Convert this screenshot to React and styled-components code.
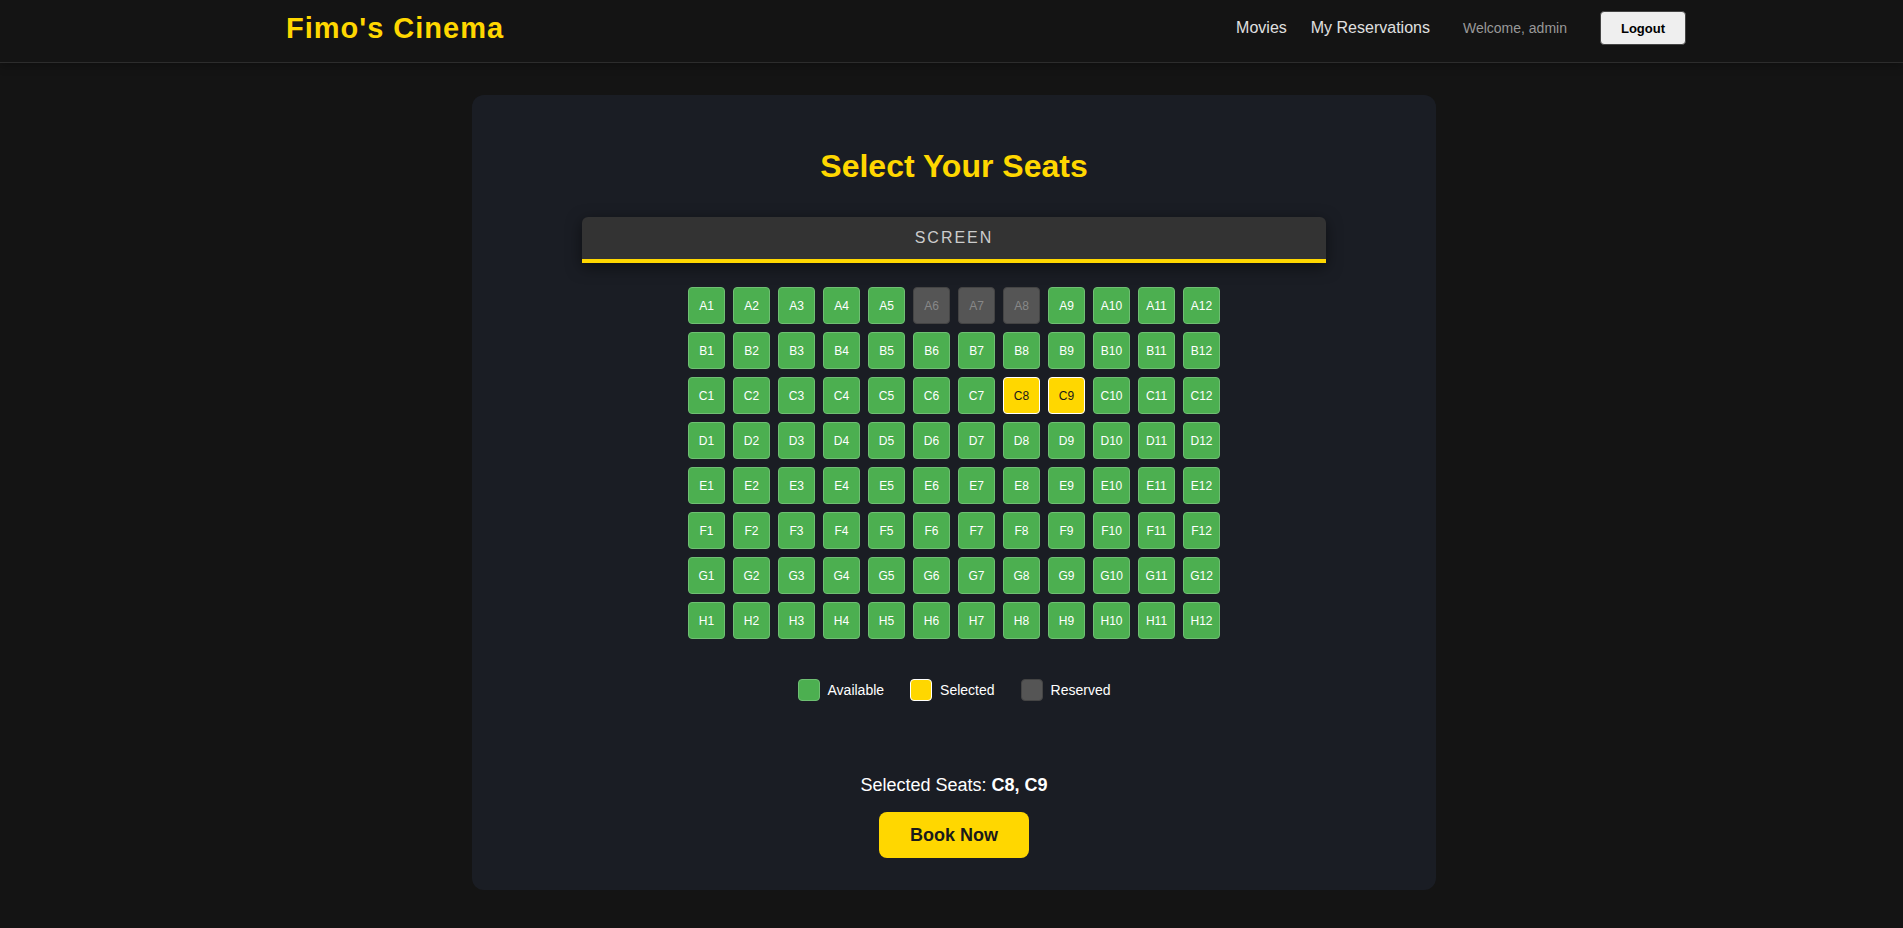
import React, { useState } from "react";
import styled, { createGlobalStyle, css } from "styled-components";

const GlobalStyle = createGlobalStyle`
  body {
    margin: 0;
    background: #141414;
    color: #ffffff;
    font-family: Arial, "Liberation Sans", sans-serif;
    font-size: 16px;
  }
`;

const Page = styled.div`
  min-height: 100vh;
`;

const Header = styled.header`
  display: flex;
  align-items: center;
  justify-content: space-between;
  padding: 11px 217px 17px 286px;
  background: #141414;
  border-bottom: 1px solid #2c2c2c;
  box-shadow: 0 2px 10px rgba(0, 0, 0, 0.3);
`;

const Logo = styled.a`
  color: #ffd700;
  font-size: 29px;
  line-height: 34px;
  font-weight: bold;
  letter-spacing: 1px;
  text-decoration: none;
`;

const Nav = styled.nav`
  display: flex;
  align-items: center;
  gap: 33px;
`;

const NavLinks = styled.div`
  display: flex;
  gap: 24px;
`;

const NavLink = styled.a`
  color: #e0e0e0;
  font-weight: 500;
  text-decoration: none;
`;

const Welcome = styled.span`
  color: #999999;
  font-size: 14px;
`;

const LogoutButton = styled.button`
  height: 34px;
  padding: 0 20px;
  border: 1px solid #444444;
  border-radius: 4px;
  background: #efefef;
  color: #000000;
  font-family: inherit;
  font-size: 13px;
  font-weight: bold;
  cursor: pointer;
`;

const Main = styled.main`
  display: flex;
  justify-content: center;
  padding: 32px 0 32px 5px;
`;

const Card = styled.section`
  display: flex;
  flex-direction: column;
  align-items: center;
  width: 100%;
  max-width: 900px;
  padding: 32px;
  border-radius: 12px;
  background: #1a1d24;
`;

const Title = styled.h1`
  margin: 21px 0 32px;
  color: #ffd700;
  font-size: 32px;
  line-height: 37px;
`;

const Screen = styled.div`
  width: 80%;
  padding: 12px;
  border-bottom: 4px solid #ffd700;
  border-radius: 6px 6px 0 0;
  background: #333333;
  box-shadow: 0 4px 15px rgba(0, 0, 0, 0.5);
  color: #cccccc;
  line-height: 18px;
  letter-spacing: 2px;
  text-align: center;
`;

const SeatGrid = styled.div`
  display: grid;
  grid-template-columns: repeat(12, 37px);
  gap: 8px;
  margin: 24px 0 40px;
`;

const statusStyles = {
  available: css`
    background: #4caf50;
    border-color: #6fbf73;
    color: #ffffff;
  `,
  selected: css`
    background: #ffd700;
    border-color: #ffffff;
    color: #1a1a1a;
  `,
  reserved: css`
    background: #555555;
    border-color: #444444;
    color: #888888;
  `,
};

const Seat = styled.button`
  height: 37px;
  padding: 0;
  border: 1px solid;
  border-radius: 4px;
  font-family: inherit;
  font-size: 12px;
  font-weight: 500;
  cursor: pointer;
  ${({ $status }) => statusStyles[$status]}

  &:disabled {
    cursor: not-allowed;
  }
`;

const Legend = styled.ul`
  display: flex;
  gap: 26px;
  margin: 0 0 74px;
  padding: 0;
  list-style: none;
`;

const LegendItem = styled.li`
  display: flex;
  align-items: center;
  gap: 8px;
  font-size: 14px;
`;

const Swatch = styled.span`
  width: 20px;
  height: 20px;
  border: 1px solid;
  border-radius: 4px;
  ${({ $status }) => statusStyles[$status]}
`;

const Summary = styled.p`
  margin: 0 0 16px;
  font-size: 18px;
  line-height: 21px;
`;

const BookButton = styled.button`
  height: 46px;
  padding: 0 31px;
  border: none;
  border-radius: 8px;
  background: #ffd700;
  color: #1a1a1a;
  font-family: inherit;
  font-size: 18px;
  font-weight: bold;
  cursor: pointer;
`;

const ROWS = ["A", "B", "C", "D", "E", "F", "G", "H"];
const SEATS = ROWS.flatMap((row) =>
  Array.from({ length: 12 }, (_, i) => `${row}${i + 1}`)
);
const RESERVED = ["A6", "A7", "A8"];
const LEGEND = [
  ["available", "Available"],
  ["selected", "Selected"],
  ["reserved", "Reserved"],
];

export default function App() {
  const [selected, setSelected] = useState(["C8", "C9"]);

  const statusOf = (seat) => {
    if (RESERVED.includes(seat)) return "reserved";
    return selected.includes(seat) ? "selected" : "available";
  };

  const toggle = (seat) =>
    setSelected((current) =>
      current.includes(seat)
        ? current.filter((s) => s !== seat)
        : [...current, seat]
    );

  return (
    <Page>
      <GlobalStyle />
      <Header>
        <Logo href="#">Fimo's Cinema</Logo>
        <Nav>
          <NavLinks>
            <NavLink href="#movies">Movies</NavLink>
            <NavLink href="#reservations">My Reservations</NavLink>
          </NavLinks>
          <Welcome>Welcome, admin</Welcome>
          <LogoutButton type="button">Logout</LogoutButton>
        </Nav>
      </Header>
      <Main>
        <Card>
          <Title>Select Your Seats</Title>
          <Screen>SCREEN</Screen>
          <SeatGrid>
            {SEATS.map((seat) => (
              <Seat
                key={seat}
                type="button"
                $status={statusOf(seat)}
                disabled={RESERVED.includes(seat)}
                aria-pressed={selected.includes(seat)}
                onClick={() => toggle(seat)}
              >
                {seat}
              </Seat>
            ))}
          </SeatGrid>
          <Legend>
            {LEGEND.map(([status, label]) => (
              <LegendItem key={status}>
                <Swatch $status={status} />
                {label}
              </LegendItem>
            ))}
          </Legend>
          <Summary>
            Selected Seats: <strong>{selected.join(", ")}</strong>
          </Summary>
          <BookButton type="button">Book Now</BookButton>
        </Card>
      </Main>
    </Page>
  );
}
